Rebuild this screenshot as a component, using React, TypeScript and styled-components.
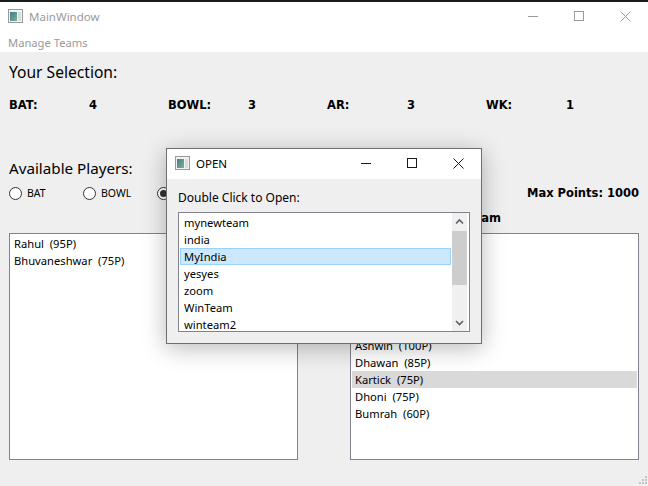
import React from 'react';
import styled, { createGlobalStyle } from 'styled-components';

const GlobalStyle = createGlobalStyle`
  html, body {
    margin: 0;
    padding: 0;
    background: #efefef;
  }
  * {
    box-sizing: border-box;
  }
`;

const FONT = '"Noto Sans", Roboto, sans-serif';
const BOLD_FONT = '"DejaVu Sans", "Noto Sans", sans-serif';

const AppIcon = () => (
  <svg width="15" height="14" viewBox="0 0 15 14">
    <defs>
      <linearGradient id="appIconFill" x1="0" y1="0" x2="1" y2="1">
        <stop offset="0" stopColor="#3f7f86" />
        <stop offset="1" stopColor="#7fae9c" />
      </linearGradient>
    </defs>
    <rect x="0.5" y="0.5" width="14" height="13" fill="#f2f2f2" stroke="#9a9a9a" />
    <rect x="2" y="3" width="7" height="9" fill="url(#appIconFill)" />
    <rect x="10" y="3" width="3" height="9" fill="#d5dfe3" />
  </svg>
);

const CaptionButtons = ({ dim }: { dim?: boolean }) => {
  const color = dim ? '#9a9a9a' : '#1a1a1a';
  return (
    <Caption>
      <CaptionButton>
        <svg width="10" height="10" viewBox="0 0 10 10">
          <path d="M0 5.5H10" stroke={color} fill="none" />
        </svg>
      </CaptionButton>
      <CaptionButton>
        <svg width="10" height="10" viewBox="0 0 10 10">
          <rect x="0.5" y="0.5" width="9" height="9" stroke={color} fill="none" />
        </svg>
      </CaptionButton>
      <CaptionButton>
        <svg width="11" height="11" viewBox="0 0 11 11">
          <path d="M0.5 0.5L10.5 10.5M10.5 0.5L0.5 10.5" stroke={color} fill="none" />
        </svg>
      </CaptionButton>
    </Caption>
  );
};

const stats = [
  { label: 'BAT:', value: 4 },
  { label: 'BOWL:', value: 3 },
  { label: 'AR:', value: 3 },
  { label: 'WK:', value: 1 },
];

const available = ['Rahul  (95P)', 'Bhuvaneshwar  (75P)'];
const picked = ['Ashwin  (100P)', 'Dhawan  (85P)', 'Kartick  (75P)', 'Dhoni  (75P)', 'Bumrah  (60P)'];
const teams = ['mynewteam', 'india', 'MyIndia', 'yesyes', 'zoom', 'WinTeam', 'winteam2'];

const App = () => {
  return (
    <>
      <GlobalStyle />
      <Screen>
        <TitleBar>
          <AppIcon />
          <MainTitle>MainWindow</MainTitle>
          <CaptionButtons dim />
        </TitleBar>
        <MenuBar>Manage Teams</MenuBar>
        <Content>
          <Heading>Your Selection:</Heading>
          <Stats>
            {stats.map((s) => (
              <React.Fragment key={s.label}>
                <StatText>{s.label}</StatText>
                <StatText>{s.value}</StatText>
              </React.Fragment>
            ))}
          </Stats>
          <PlayersHeading>Available Players:</PlayersHeading>
          <FilterRow>
            <Radio>
              <RadioDot />
              BAT
            </Radio>
            <Radio>
              <RadioDot />
              BOWL
            </Radio>
            <Radio>
              <RadioDot $checked />
            </Radio>
            <MaxPoints>Max Points: 1000</MaxPoints>
          </FilterRow>
          <TeamLabel>Team</TeamLabel>
          <Lists>
            <PlayerList>
              {available.map((p) => (
                <PlayerRow key={p}>{p}</PlayerRow>
              ))}
            </PlayerList>
            <PlayerList $offset={103}>
              {picked.map((p) => (
                <PlayerRow key={p} $current={p.startsWith('Kartick')}>
                  {p}
                </PlayerRow>
              ))}
            </PlayerList>
          </Lists>
        </Content>
        <Grip width="12" height="12" viewBox="0 0 12 12">
          <path d="M9 2h2v2H9zM6 5h2v2H6zM9 5h2v2H9zM3 8h2v2H3zM6 8h2v2H6zM9 8h2v2H9z" fill="#c4c4c4" />
        </Grip>
        <Dialog>
          <DialogTitleBar>
            <AppIcon />
            <DialogTitle>OPEN</DialogTitle>
            <CaptionButtons />
          </DialogTitleBar>
          <DialogBody>
            <DialogLabel>Double Click to Open:</DialogLabel>
            <TeamBox>
              <TeamRows>
                {teams.map((t) => (
                  <TeamRow key={t} $selected={t === 'MyIndia'}>
                    {t}
                  </TeamRow>
                ))}
              </TeamRows>
              <ScrollTrack>
                <svg width="15" height="17" viewBox="0 0 15 17">
                  <path d="M4 10.5L7.5 7L11 10.5" stroke="#606060" strokeWidth="1.6" fill="none" />
                </svg>
                <ScrollThumb />
                <svg width="15" height="17" viewBox="0 0 15 17">
                  <path d="M4 7L7.5 10.5L11 7" stroke="#606060" strokeWidth="1.6" fill="none" />
                </svg>
              </ScrollTrack>
            </TeamBox>
          </DialogBody>
        </Dialog>
      </Screen>
    </>
  );
};

export default App;

const Screen = styled.div`
  position: relative;
  width: 648px;
  height: 486px;
  overflow: hidden;
  background: #efefef;
  border-top: 2px solid #1a1a1a;
  font-family: ${FONT};
  color: #000;
`;

const TitleBar = styled.div`
  display: flex;
  align-items: center;
  height: 30px;
  padding: 0 0 2px 8px;
  background: #fff;
`;

const MainTitle = styled.span`
  margin-left: 6px;
  font-size: 11.5px;
  color: #9a9a9a;
`;

const Caption = styled.div`
  display: flex;
  margin-left: auto;
`;

const CaptionButton = styled.div`
  display: flex;
  align-items: center;
  justify-content: center;
  width: 46px;
  height: 28px;
`;

const MenuBar = styled.div`
  display: flex;
  align-items: center;
  height: 20px;
  padding-left: 8px;
  background: #fff;
  font-size: 11.2px;
  color: #9a9a9a;
`;

const Content = styled.div`
  padding: 9px 9px 0;
`;

const Heading = styled.div`
  height: 22px;
  line-height: 22px;
  font-size: 15.6px;
`;

const Stats = styled.div`
  display: grid;
  grid-template-columns: 80px 79px 80px 79px 80px 79px 80px 79px;
  margin-top: 14px;
  height: 16px;
`;

const StatText = styled.div`
  line-height: 16px;
  font-family: ${BOLD_FONT};
  font-size: 11.5px;
  font-weight: 700;
`;

const PlayersHeading = styled(Heading)`
  margin-top: 44px;
  font-size: 15.2px;
`;

const FilterRow = styled.div`
  display: flex;
  align-items: center;
  margin-top: 5px;
  height: 18px;
`;

const Radio = styled.label`
  display: flex;
  align-items: center;
  gap: 5px;
  width: 74px;
  font-size: 10.5px;
`;

const RadioDot = styled.span<{ $checked?: boolean }>`
  display: flex;
  align-items: center;
  justify-content: center;
  width: 13px;
  height: 13px;
  border: 1px solid #333;
  border-radius: 50%;
  background: #fff;
  &::after {
    content: '';
    display: ${(p) => (p.$checked ? 'block' : 'none')};
    width: 7px;
    height: 7px;
    border-radius: 50%;
    background: #333;
  }
`;

const MaxPoints = styled.div`
  margin-left: auto;
  font-family: ${BOLD_FONT};
  font-size: 11.5px;
  font-weight: 700;
`;

const TeamLabel = styled.div`
  margin: 8px 0 0 341px;
  width: 151px;
  height: 16px;
  line-height: 16px;
  text-align: right;
  font-family: ${BOLD_FONT};
  font-size: 11.5px;
  font-weight: 700;
`;

const Lists = styled.div`
  display: flex;
  justify-content: space-between;
  margin-top: 7px;
`;

const PlayerList = styled.div<{ $offset?: number }>`
  width: 289px;
  height: 227px;
  padding: 1px 1px 0;
  padding-top: ${(p) => p.$offset ?? 1}px;
  border: 1px solid #82828c;
  background: #fff;
`;

const PlayerRow = styled.div<{ $current?: boolean }>`
  height: 17px;
  line-height: 17px;
  padding-left: 3px;
  white-space: pre;
  font-size: 11.2px;
  background: ${(p) => (p.$current ? '#d9d9d9' : 'transparent')};
`;

const Grip = styled.svg`
  position: absolute;
  right: 0;
  bottom: 0;
`;

const Dialog = styled.div`
  position: absolute;
  left: 166px;
  top: 146px;
  width: 316px;
  height: 196px;
  border: 1px solid #6e6e6e;
  background: #efefef;
  box-shadow: 0 4px 22px rgba(0, 0, 0, 0.28);
`;

const DialogTitleBar = styled.div`
  display: flex;
  align-items: center;
  height: 30px;
  padding: 0 0 2px 8px;
  background: #fff;
`;

const DialogTitle = styled.span`
  margin-left: 6px;
  font-size: 11.5px;
`;

const DialogBody = styled.div`
  padding: 11px 11px 0;
`;

const DialogLabel = styled.div`
  height: 16px;
  line-height: 16px;
  font-size: 12px;
`;

const TeamBox = styled.div`
  display: flex;
  height: 120px;
  margin-top: 6px;
  border: 1px solid #82828c;
  background: #fff;
`;

const TeamRows = styled.div`
  flex: 1;
  min-width: 0;
  overflow: hidden;
  padding: 1px 1px 0;
`;

const TeamRow = styled.div<{ $selected?: boolean }>`
  height: 17px;
  line-height: 15px;
  padding-left: 3px;
  font-size: 11.2px;
  border: 1px solid ${(p) => (p.$selected ? '#99d1ff' : 'transparent')};
  background: ${(p) => (p.$selected ? '#cce8ff' : 'transparent')};
`;

const ScrollTrack = styled.div`
  display: flex;
  flex-direction: column;
  width: 15px;
  margin-right: 2px;
  background: #f0f0f0;
`;

const ScrollThumb = styled.div`
  height: 54px;
  margin-top: 1px;
  margin-bottom: auto;
  background: #cdcdcd;
`;
